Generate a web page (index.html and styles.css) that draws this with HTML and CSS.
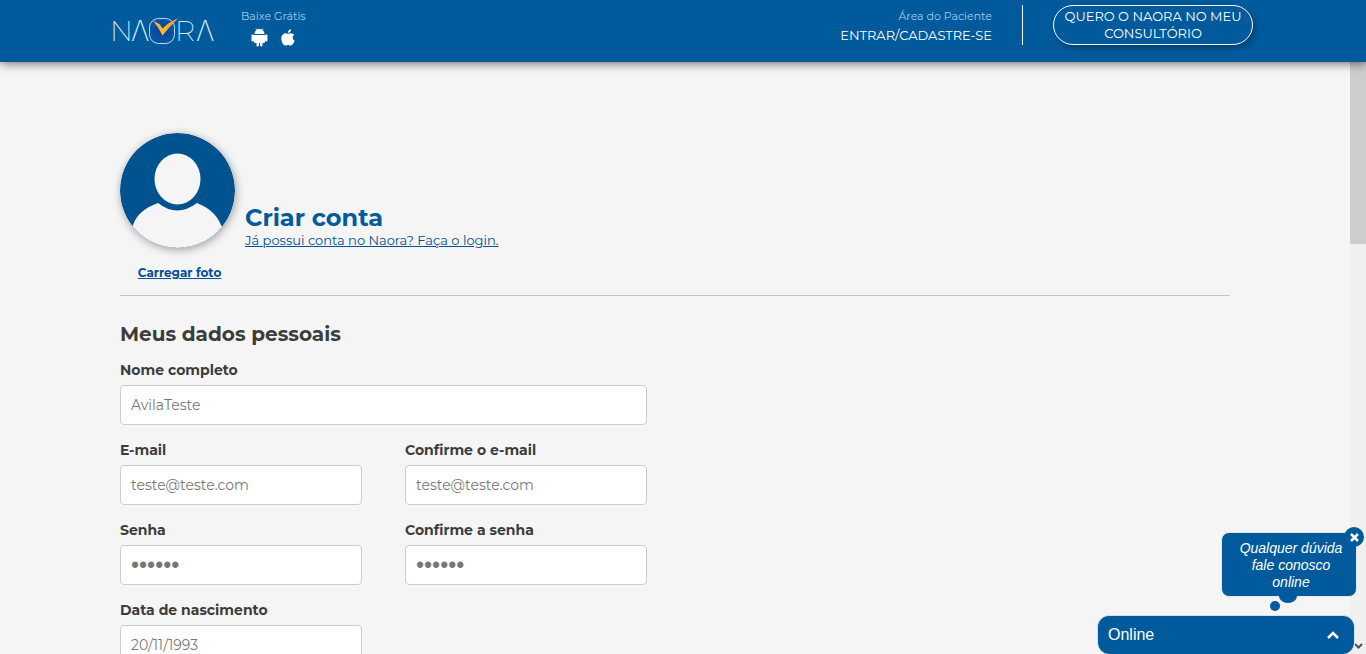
FILE: index.html
```html
<!DOCTYPE html>
<html lang="pt-BR">
<head>
<meta charset="utf-8">
<meta name="viewport" content="width=device-width, initial-scale=1">
<title>Naora - Criar conta</title>
<link rel="stylesheet" href="styles.css">
</head>
<body>
<header class="topbar">
  <div class="topbar-inner">
    <a class="logo" href="#" aria-label="Naora">
      <svg width="102" height="48" viewBox="0 0 102 48">
        <defs>
          <linearGradient id="check" x1="0" y1="1" x2="1" y2="0">
            <stop offset="0" stop-color="#ffc933"/>
            <stop offset="0.5" stop-color="#fbb026"/>
            <stop offset="1" stop-color="#ea9a22"/>
          </linearGradient>
          <radialGradient id="ring">
            <stop offset="0" stop-color="#0b3f9e"/>
            <stop offset="1" stop-color="#0558a6"/>
          </radialGradient>
        </defs>
        <rect x="36.500" y="13.500" width="25" height="25" rx="9" fill="url(#ring)" stroke="#b9dcf5" stroke-width="1"/>
        <g class="logo-text">
          <text x="-3" y="36">N</text>
          <text class="lambda" x="18" y="36">Λ</text>
          <text x="62" y="36">R</text>
          <text class="lambda" x="83" y="36">Λ</text>
        </g>
        <path d="M40 15.500 L47 19.500 L49.500 23.500 Q56 17 65.500 13 Q57 21 49.500 30.500 Q46 23 40 15.500 Z" fill="url(#check)"/>
      </svg>
    </a>
    <div class="download">
      <span class="muted">Baixe Grátis</span>
      <div class="stores">
        <a href="#" aria-label="Android">
          <svg width="17" height="19" viewBox="0 0 17 19" fill="#fff">
            <path d="M3.500 6 A5 5 0 0 1 13.500 6 Z"/>
            <path d="M5 0.500 L6.500 2.500 M12 0.500 L10.500 2.500" stroke="#fff" stroke-width="0.800"/>
            <path d="M3 7 H14 V14 Q14 15 13 15 H11.500 V17.500 Q11.500 18.500 10.500 18.500 T9 17.500 V15 H8 V17.500 Q8 18.500 6.500 18.500 T5.500 17.500 V15 H4 Q3 15 3 14 Z"/>
            <rect x="0.500" y="6.500" width="2.700" height="7" rx="1.200"/>
            <rect x="13.800" y="6.500" width="2.700" height="7" rx="1.200"/>
          </svg>
        </a>
        <a href="#" aria-label="Apple">
          <svg width="14" height="17" viewBox="0 0 14 17" fill="#fff">
            <path d="M10 0 Q10.200 3.600 6.800 4 Q6.800 1 10 0 Z"/>
            <path d="M7 5 Q10.500 3 13.200 5.800 Q9.800 8.500 13.600 11.800 Q11.500 17.200 9.300 16.500 Q7 15.500 5 16.500 Q2.500 17.200 .8 12.500 Q-.8 6.800 2.500 4.900 Q4.500 3.800 7 5 Z"/>
          </svg>
        </a>
      </div>
    </div>
    <div class="patient">
      <span class="muted">Área do Paciente</span>
      <a href="#" class="enter">ENTRAR/CADASTRE-SE</a>
    </div>
    <a href="#" class="cta">QUERO O NAORA NO MEU CONSULTÓRIO</a>
  </div>
</header>
<div class="viewport">
  <main class="content">
    <div class="container">
      <section class="profile">
        <div class="photo">
          <svg class="avatar" width="115" height="115" viewBox="0 0 115 115">
            <defs><clipPath id="disc"><circle cx="57.500" cy="57.500" r="57.500"/></clipPath></defs>
            <g clip-path="url(#disc)">
              <rect width="115" height="115" fill="#00538f"/>
              <path d="M0 115 L13 92 Q18 77 38 70 Q57 85 77 70 Q95 77 101 92 L115 115 Z" fill="#f5f5f5"/>
              <ellipse cx="57.500" cy="46" rx="23" ry="25.500" fill="#f5f5f5"/>
            </g>
          </svg>
          <a href="#" class="upload">Carregar foto</a>
        </div>
        <div class="intro">
          <h1>Criar conta</h1>
          <a href="#">Já possui conta no Naora? Faça o login.</a>
        </div>
      </section>
      <h2>Meus dados pessoais</h2>
      <form class="form">
        <div class="field wide"><label for="nome">Nome completo</label><input id="nome" type="text" value="AvilaTeste"></div>
        <div class="field"><label for="email">E-mail</label><input id="email" type="email" value="teste@teste.com"></div>
        <div class="field"><label for="email2">Confirme o e-mail</label><input id="email2" type="email" value="teste@teste.com"></div>
        <div class="field"><label for="senha">Senha</label><input id="senha" type="password" value="123456"></div>
        <div class="field"><label for="senha2">Confirme a senha</label><input id="senha2" type="password" value="123456"></div>
        <div class="field"><label for="data">Data de nascimento</label><input id="data" type="text" value="20/11/1993"></div>
      </form>
    </div>
  </main>
  <div class="track" aria-hidden="true">
    <div class="thumb"></div>
    <svg class="arrow" width="9" height="6" viewBox="0 0 9 6"><path d="M1 1 L4.500 4.500 L8 1" fill="none" stroke="#505050" stroke-width="2"/></svg>
  </div>
</div>
<aside class="chat">
  <div class="bubble">
    <p>Qualquer dúvida fale conosco online</p>
    <button class="close" type="button" aria-label="Fechar">
      <svg width="9" height="9" viewBox="0 0 9 9"><path d="M1 1 L8 8 M8 1 L1 8" stroke="#fff" stroke-width="2.500"/></svg>
    </button>
    <svg class="tail" width="30" height="17" viewBox="0 0 30 17" fill="#005a9c"><ellipse cx="20" cy="0" rx="9" ry="7"/><circle cx="7" cy="10" r="5"/></svg>
  </div>
  <button class="online" type="button">
    <span>Online</span>
    <svg width="12" height="8" viewBox="0 0 12 8"><path d="M1 7 L6 2 L11 7" fill="none" stroke="#fff" stroke-width="2.500"/></svg>
  </button>
</aside>
</body>
</html>
```
FILE: styles.css
```css
* { box-sizing: border-box; }
body {
  margin: 0;
  height: 100vh;
  display: flex;
  flex-direction: column;
  overflow: hidden;
  background: #f5f5f5;
  color: #3c3c3b;
  font-family: Montserrat, Inter, sans-serif;
}
.topbar {
  flex: none;
  position: relative;
  z-index: 1;
  background: #005a9c;
  box-shadow: 0 1px 10px rgba(0, 0, 0, .6);
}
.topbar-inner {
  max-width: 1140px;
  min-height: 62px;
  margin: 0 auto;
  padding-top: 5px;
  display: flex;
  align-items: flex-start;
}
.logo svg, .stores svg { display: block; overflow: visible; }
.logo-text {
  font-family: Montserrat, Inter, sans-serif;
  font-weight: 200;
  font-size: 28px;
  fill: #d5ebfa;
}
.lambda { font-family: Inter, sans-serif; }
.muted { font-size: 11px; line-height: 22px; color: #a3cdec; }
.download { margin-left: 26px; display: flex; flex-direction: column; }
.stores { display: flex; align-items: center; gap: 13px; padding: 1px 0 0 10px; }
.patient {
  margin-left: auto;
  height: 40px;
  padding-right: 30px;
  border-right: 1px solid #fff;
  display: flex;
  flex-direction: column;
  align-items: flex-end;
}
.enter { font-size: 13px; line-height: 16px; color: #fff; text-decoration: none; }
.cta {
  width: 200px;
  margin-left: 30px;
  padding: 2px 8px;
  border: 1px solid #fff;
  border-radius: 20px;
  box-shadow: 2px 3px 6px rgba(0, 0, 0, .3);
  color: #fff;
  font-size: 13px;
  line-height: 17px;
  text-align: center;
  text-decoration: none;
}
.viewport { flex: 1; min-height: 0; display: flex; }
.content { flex: 1; min-width: 0; overflow: hidden; }
.container { max-width: 1140px; margin: 0 auto; padding: 71px 15px 0; }
.profile {
  display: flex;
  align-items: flex-start;
  gap: 10px;
  padding-bottom: 12px;
  border-bottom: 1px solid #c8c8c8;
}
.photo { display: flex; flex-direction: column; align-items: center; gap: 15px; }
.avatar { display: block; border-radius: 50%; box-shadow: 1px 2px 8px rgba(0, 0, 0, .35); }
.profile a { color: #005096; }
.upload { font-size: 12px; font-weight: 700; line-height: 20px; padding-left: 4px; }
.intro { padding-top: 70px; }
h1 { margin: 0; font-size: 24px; line-height: 30px; color: #005a9c; }
.intro a { display: block; font-size: 13px; line-height: 15px; }
h2 { margin: 25px 0 12px; font-size: 20px; line-height: 26px; }
.form {
  max-width: 527px;
  display: grid;
  grid-template-columns: 1fr 1fr;
  gap: 14px 43px;
}
.wide { grid-column: 1 / -1; }
.field { display: flex; flex-direction: column; gap: 4px; min-width: 0; }
label { font-size: 14px; font-weight: 700; line-height: 22px; }
input {
  width: 100%;
  height: 40px;
  padding: 0 10px;
  border: 1px solid #ccc;
  border-radius: 4px;
  background: #fff;
  color: #777;
  font: 14px Montserrat, Inter, sans-serif;
}
input[type="password"] { font: 23px "Liberation Sans", Arial, sans-serif; }
.track {
  flex: none;
  width: 16px;
  background: #f0f0f0;
  display: flex;
  flex-direction: column;
  justify-content: space-between;
  align-items: center;
  padding-bottom: 5px;
}
.thumb { width: 100%; height: 182px; background: #cdcdcd; }
.chat {
  position: fixed;
  right: 11px;
  bottom: 0;
  z-index: 2;
  width: 258px;
  display: flex;
  flex-direction: column;
  align-items: flex-end;
  gap: 18px;
  font-family: "Liberation Sans", Arial, sans-serif;
  color: #fff;
}
.bubble {
  position: relative;
  width: 136px;
  margin-right: -2px;
  padding: 7px 12px 5px 16px;
  border: 1px solid #e2eaf2;
  border-radius: 8px;
  background: #005a9c;
}
.bubble p { margin: 0; font-size: 14px; font-style: italic; line-height: 17px; text-align: center; }
.tail { position: absolute; top: 100%; left: 46px; }
.close {
  position: absolute;
  top: -6px;
  right: -8px;
  width: 20px;
  height: 20px;
  padding: 0;
  border: 0;
  border-radius: 50%;
  background: #005a9c;
  display: flex;
  align-items: center;
  justify-content: center;
}
.online {
  width: 100%;
  height: 39px;
  padding: 0 15px 0 10px;
  border: 1px solid #d5e3f0;
  border-bottom: 0;
  border-radius: 12px;
  background: #005a9c;
  color: #fff;
  font: 16px "Liberation Sans", Arial, sans-serif;
  display: flex;
  align-items: center;
  justify-content: space-between;
}
```
